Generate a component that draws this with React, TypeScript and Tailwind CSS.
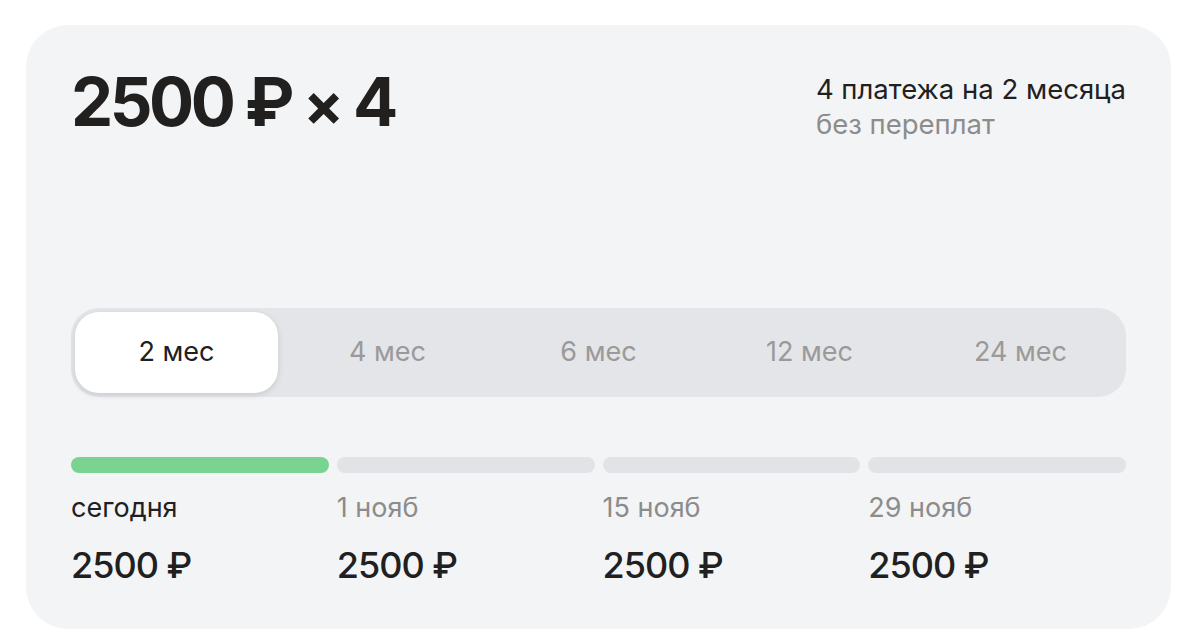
import React from "react";

const tabs = ["2 мес", "4 мес", "6 мес", "12 мес", "24 мес"];

const payments = [
  { date: "сегодня", amount: "2500 ₽", paid: true },
  { date: "1 нояб", amount: "2500 ₽", paid: false },
  { date: "15 нояб", amount: "2500 ₽", paid: false },
  { date: "29 нояб", amount: "2500 ₽", paid: false },
];

export default function App() {
  return (
    <div
      className="h-[641px] w-[1200px] bg-white pl-[26px] pt-[25px]"
      style={{ fontFamily: "Inter, 'Noto Sans', sans-serif" }}
    >
      <div className="flex h-[604px] w-[1145px] flex-col rounded-[42px] bg-[#f3f4f6] px-[45px] pt-[43px]">
        <div className="flex h-[68px] items-start justify-between">
          <h1 className="text-[67px] font-bold leading-none tracking-[-3.5px] text-[#21201f]">
            2500 ₽ <span className="text-[60px]">×</span> 4
          </h1>
          <div className="pt-[4px] text-[27.5px] leading-[35px]">
            <div className="text-[#21201f]">4 платежа на 2 месяца</div>
            <div className="text-[#8c8c8c]">без переплат</div>
          </div>
        </div>

        <div className="mt-[172px] grid h-[89px] grid-cols-5 rounded-[28px] bg-[#e4e5e8]">
          {tabs.map((t, i) => (
            <div
              key={t}
              className={
                i === 0
                  ? "m-[4px] flex items-center justify-center rounded-[24px] bg-white text-[27px] text-[#21201f] shadow-[0_2px_6px_rgba(0,0,0,0.12)]"
                  : "flex items-center justify-center text-[27px] text-[#9a9a9a]"
              }
            >
              {t}
            </div>
          ))}
        </div>

        <div className="mt-[60px] grid grid-cols-4 gap-[8px]">
          {payments.map((p) => (
            <div key={p.date} className="flex flex-col">
              <div
                className={
                  p.paid
                    ? "h-[16px] rounded-full bg-[#7bd391]"
                    : "h-[16px] rounded-full bg-[#e2e3e6]"
                }
              />
              <div
                className={
                  p.paid
                    ? "mt-[18px] text-[27px] leading-[34px] text-[#21201f]"
                    : "mt-[18px] text-[27px] leading-[34px] text-[#8c8c8c]"
                }
              >
                {p.date}
              </div>
              <div className="mt-[18px] text-[36px] font-medium leading-[44px] tracking-[-1px] text-[#21201f]">
                {p.amount}
              </div>
            </div>
          ))}
        </div>
      </div>
    </div>
  );
}
